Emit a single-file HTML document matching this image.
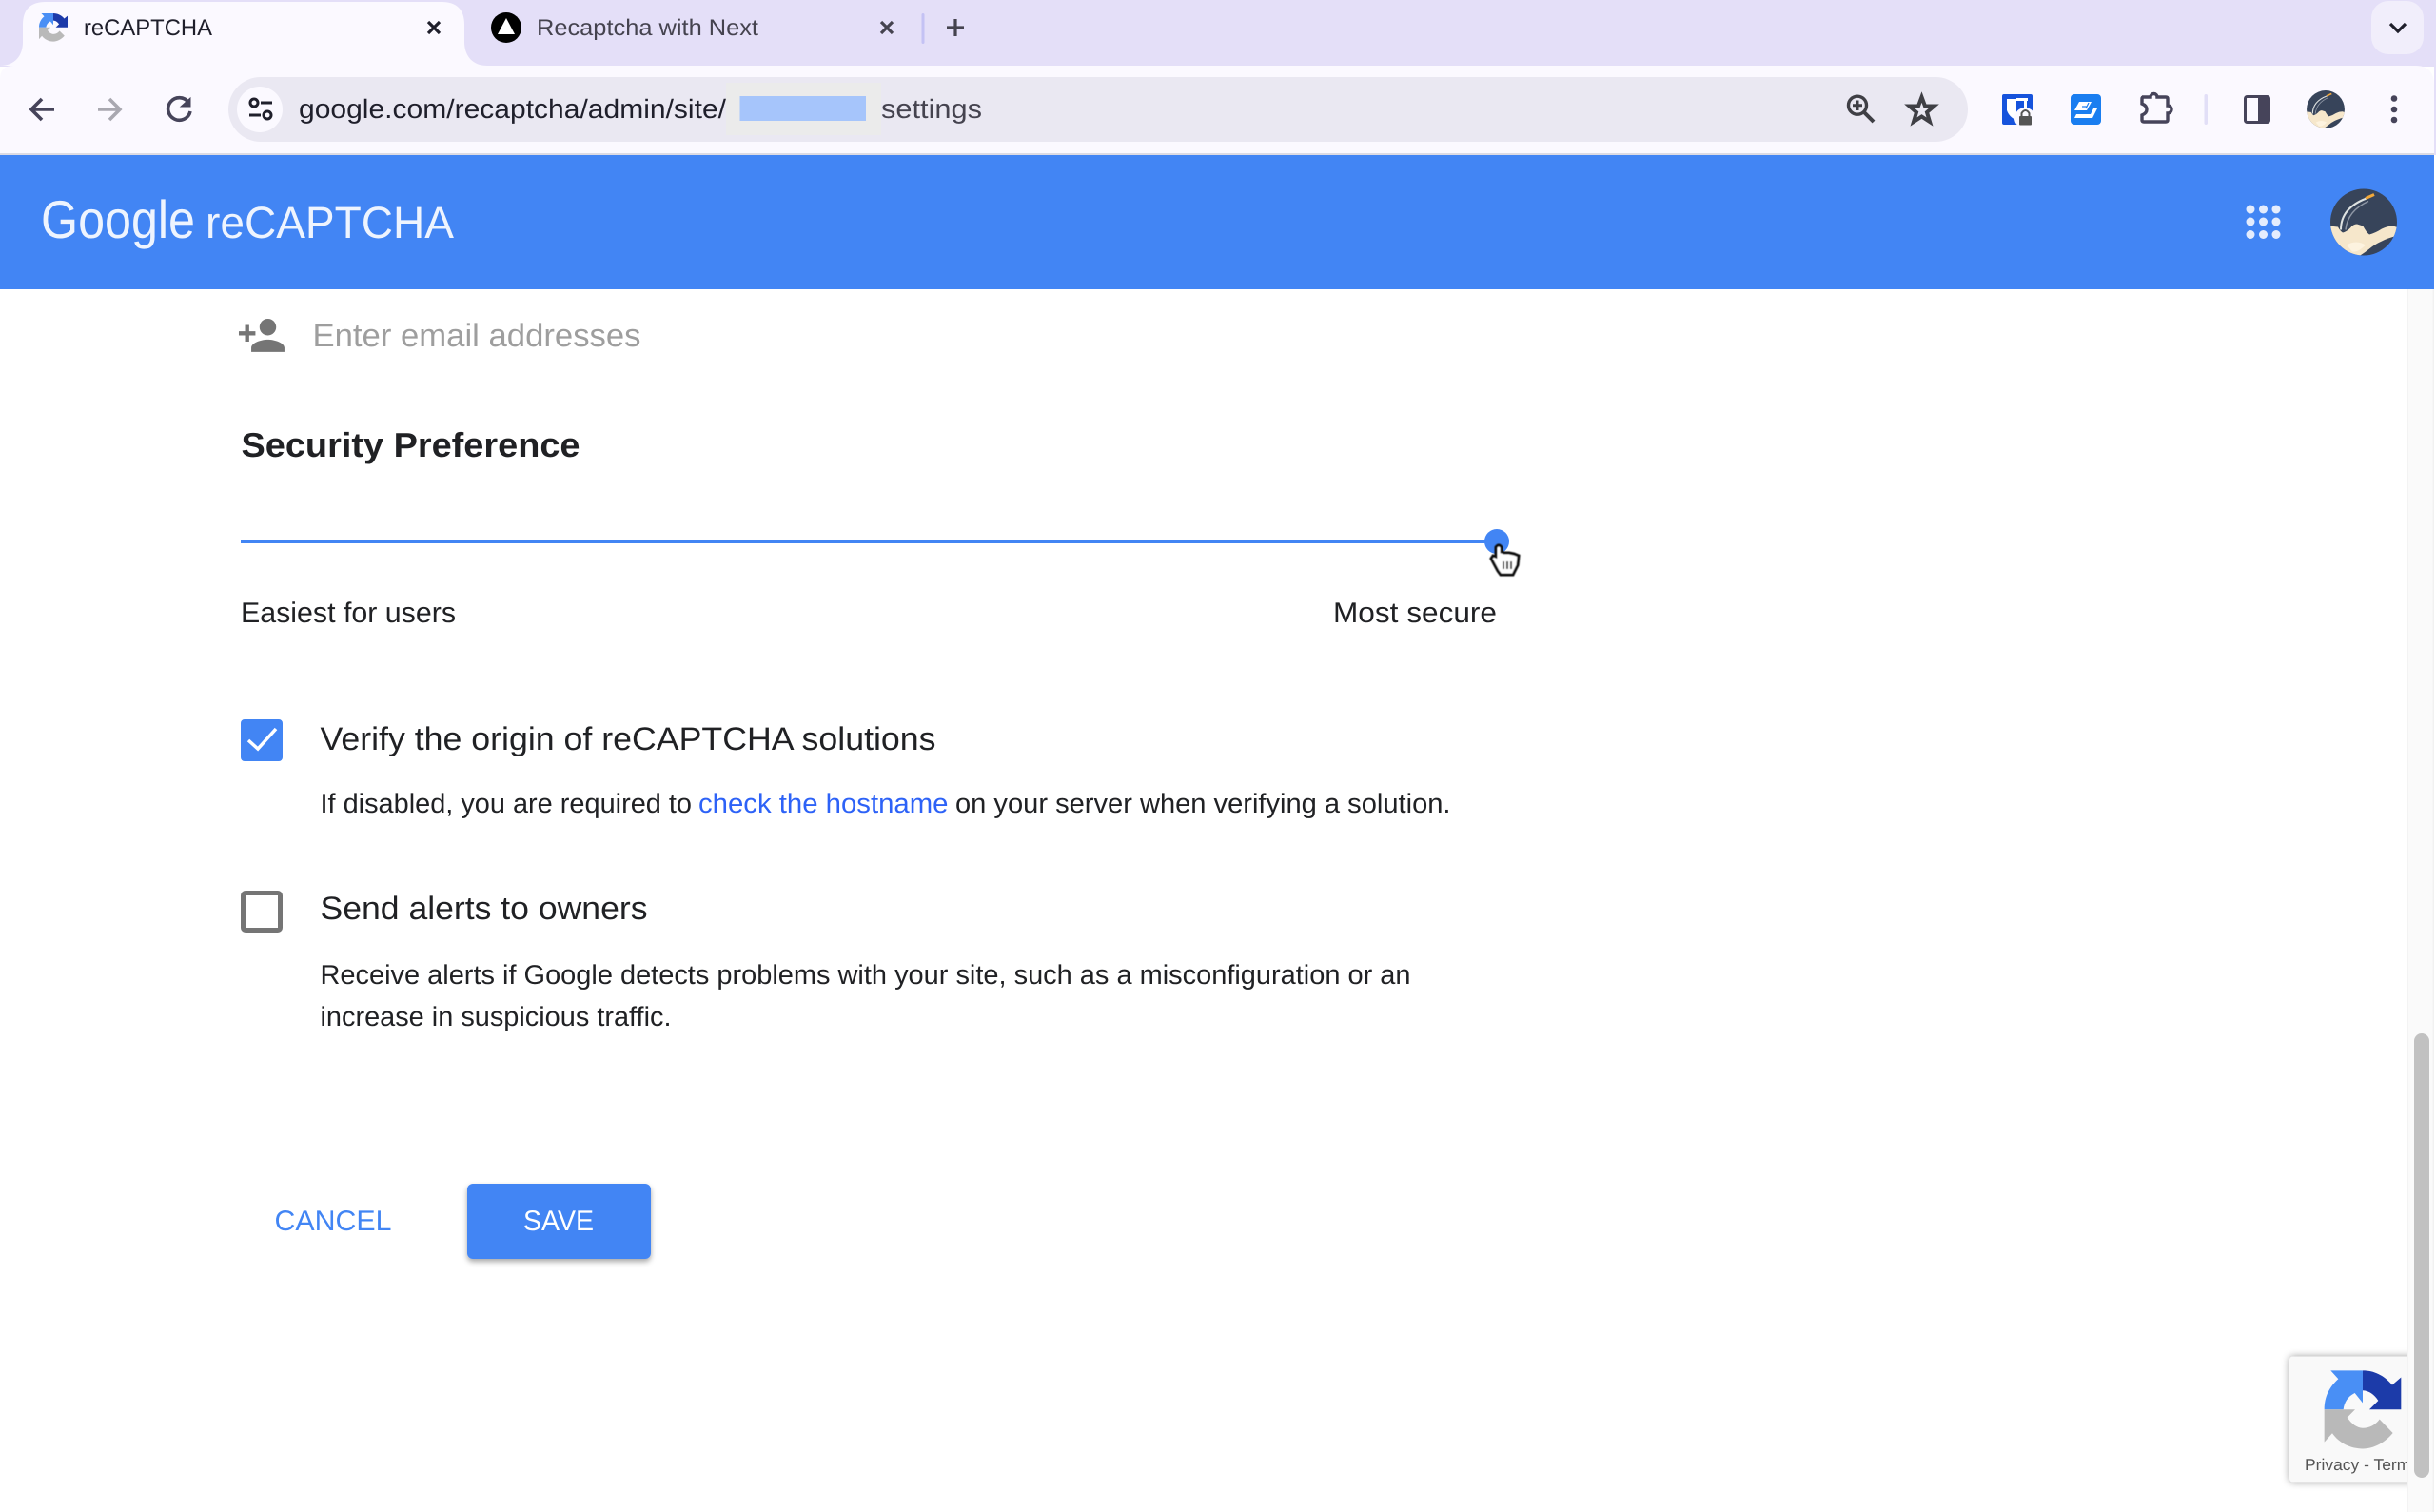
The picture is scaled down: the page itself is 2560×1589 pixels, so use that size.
<!DOCTYPE html>
<html lang="en">
<head>
<meta charset="utf-8">
<title>reCAPTCHA</title>
<style>
html,body{margin:0;padding:0;background:#fff;width:2560px;height:1589px;overflow:hidden}
svg{display:block}
text{font-family:"Liberation Sans",sans-serif;text-rendering:geometricPrecision}
</style>
</head>
<body>
<svg xmlns="http://www.w3.org/2000/svg" width="2560" height="1589" viewBox="0 0 2560 1589">
<defs>
<filter id="sh1" x="-20%" y="-20%" width="140%" height="150%"><feDropShadow dx="0" dy="3" stdDeviation="3" flood-color="#000" flood-opacity=".35"/></filter>
<filter id="sh2" x="-20%" y="-20%" width="140%" height="140%"><feDropShadow dx="0" dy="0" stdDeviation="4" flood-color="#000" flood-opacity=".4"/></filter>
<filter id="blur1"><feGaussianBlur stdDeviation=".6"/></filter>
<filter id="blur2"><feGaussianBlur stdDeviation=".4"/></filter>
<g id="rc">
<path fill="#4a8ff5" d="M188 1255C188 1215 205 1185 232 1162L208 1136H309V1235L284 1205C262 1215 250 1235 248 1255Z"/>
<path fill="#1c3aa9" d="M309 1136C345 1136 375 1150 402 1180L430 1157V1255H330L358 1228C345 1210 330 1198 309 1197Z"/>
<path fill="#b9b9b9" d="M188 1255H285L260 1280C275 1300 290 1311 309 1312C330 1312 350 1302 362 1285L404 1327C380 1355 345 1375 309 1375C270 1375 235 1358 213 1328L188 1355Z"/>
</g>
<clipPath id="avc"><circle r="35"/></clipPath>
<g id="av">
<circle r="35" fill="#37445a"/>
<g clip-path="url(#avc)">
<path fill="#f6e7cb" d="M-36 4L-27 5Q-25 9 -22 11Q-18 10 -14 6Q-11 2 -7 2L-.7 4Q3 11 6 13Q13 11 19 7Q25 4 31 4L37 6V14Q27 16 19 20Q12 23 6 28Q0 33 -7 37H-36Z"/>
<path fill="#fdf3df" d="M-18 24Q-8 18 2 24Q-6 32 -12 31Z"/>
</g>
<path fill="none" stroke="#dfe3e2" stroke-width="2" d="M-24 8Q-24 -15 3 -25"/>
<path fill="none" stroke="#8e97a5" stroke-width="1.500" d="M-19 8Q-17 -12 5 -22"/>
<path fill="none" stroke="#f2a93b" stroke-width="3" d="M2 -25L11 -29"/>
</g>
</defs>

<!-- tab strip -->
<rect width="2560" height="70" fill="#e4dff8"/>
<rect x="2492" y="1" width="55" height="56" rx="18" fill="#f1eefb"/>
<path d="M2512 25L2520 33L2528 25" fill="none" stroke="#1f1f2b" stroke-width="3.200"/>

<!-- toolbar -->
<path d="M0 83Q0 69 14 69H2538Q2558 69 2558 89V163H0Z" fill="#fbf9ff"/>
<rect y="161" width="2558" height="2" fill="#dcdbe4"/>
<rect x="2558" y="69" width="2" height="94" fill="#e4dff8"/>

<!-- active tab -->
<path d="M0 69C16 69 24 58 24 44V26Q24 2 48 2H464Q488 2 488 26V44C488 58 496 69 512 69Z" fill="#fbf9ff"/>
<use href="#rc" transform="translate(41 14) scale(.124) translate(-188 -1136)"/>
<text x="88" y="37" font-size="24" fill="#1f1f2b" textLength="135" lengthAdjust="spacingAndGlyphs">reCAPTCHA</text>
<path d="M450 23L462 35M462 23L450 35" stroke="#1f1f2b" stroke-width="3.200" fill="none"/>

<!-- second tab -->
<circle cx="532" cy="29" r="16" fill="#000"/>
<path d="M532 19L541 36H523Z" fill="#fff"/>
<text x="564" y="37" font-size="24" fill="#45434f" textLength="233" lengthAdjust="spacingAndGlyphs">Recaptcha with Next</text>
<path d="M926 23L938 35M938 23L926 35" stroke="#45434f" stroke-width="3.200" fill="none"/>
<rect x="968.500" y="14" width="3" height="32" rx="1.500" fill="#c4c2f4"/>
<path d="M1004 20V38M995 29H1013" stroke="#45434f" stroke-width="3.200" fill="none"/>

<!-- nav icons -->
<path d="M57 115H33M44 104L33 115L44 126" fill="none" stroke="#46445a" stroke-width="3.600"/>
<path d="M103 115H126M115 104L126 115L115 126" fill="none" stroke="#a9a8b0" stroke-width="3.600"/>
<path d="M198 107.500A11.800 11.800 0 1 0 200 117" fill="none" stroke="#46445a" stroke-width="3.600"/>
<path d="M190 112H200V103Z" fill="#46445a" stroke="#46445a" stroke-width="1"/>

<!-- omnibox -->
<rect x="240" y="81" width="1828" height="68" rx="34" fill="#eae8f2"/>
<circle cx="273" cy="115" r="24" fill="#fbf9ff"/>
<circle cx="267" cy="108" r="4" fill="none" stroke="#1f1f2b" stroke-width="3"/>
<path d="M274 108H286M262 121H274" stroke="#1f1f2b" stroke-width="3"/>
<circle cx="281" cy="121" r="4" fill="none" stroke="#1f1f2b" stroke-width="3"/>
<text x="314" y="124" font-size="28" fill="#1f1f2b" textLength="449" lengthAdjust="spacingAndGlyphs">google.com/recaptcha/admin/site/</text>
<rect x="763" y="87" width="163" height="55" fill="#ebebeb"/>
<rect x="777.500" y="101" width="132.500" height="26" fill="#a6c5fb"/>
<text x="926" y="124" font-size="28" fill="#45434f" textLength="106" lengthAdjust="spacingAndGlyphs">settings</text>

<!-- zoom, star -->
<circle cx="1952" cy="110.700" r="9.500" fill="none" stroke="#3f3f45" stroke-width="3.400"/>
<path d="M1952 105.500V116M1947 110.700H1957" stroke="#3f3f45" stroke-width="3"/>
<path d="M1959 118L1969 128" stroke="#3f3f45" stroke-width="4"/>
<path d="M2019.500 102L2023 111.500H2032.500L2025 118L2028 128L2019.500 122.500L2011 128L2014 118L2006.500 111.500H2016Z" fill="none" stroke="#3f3f45" stroke-width="4"/>

<!-- extensions -->
<rect x="2104" y="99" width="32" height="32" rx="2" fill="#1653dc"/>
<path d="M2109 104H2119V118Q2119 124 2124 128Q2112 125 2109 116Z" fill="#fff"/>
<path d="M2119 104H2131V118H2119Z" fill="#1653dc"/>
<rect x="2127" y="103" width="3" height="16" fill="#fff"/>
<path d="M2119 103H2131V106H2119Z" fill="#fff"/>
<circle cx="2128" cy="124" r="11" fill="#fbf9ff"/>
<rect x="2122" y="122" width="13" height="9.500" rx="1" fill="#555"/>
<path d="M2124.500 122V119Q2128.500 113 2132.500 119V122" fill="none" stroke="#555" stroke-width="2"/>

<rect x="2176" y="99" width="32" height="32" rx="4" fill="#1a7ef0"/>
<path d="M2185 107H2198L2193 116H2180Z" fill="#fff"/>
<path d="M2200 114H2204L2199 124H2180L2182 120H2197Z" fill="#fff"/>
<path d="M2188 112H2193M2195 108L2192 114" stroke="#1a7ef0" stroke-width="1.200" fill="none"/>

<path d="M2251 102H2260A3.500 3.500 0 0 1 2267 102H2276Q2278 102 2278 104V111A3.800 3.800 0 0 1 2278 119V126Q2278 128 2276 128H2253Q2251 128 2251 126V121Q2256 119 2256 115Q2256 111 2251 109V104Q2251 102 2253 102Z" fill="none" stroke="#46445a" stroke-width="3.400"/>

<rect x="2316.500" y="99" width="3.500" height="32" rx="1.700" fill="#e2dff7"/>
<rect x="2359.500" y="101.500" width="25" height="27" rx="2" fill="none" stroke="#46445a" stroke-width="3"/>
<rect x="2373" y="101" width="12" height="28" fill="#46445a"/>

<use href="#av" transform="translate(2444 115) scale(.57)"/>
<circle cx="2516" cy="103.500" r="3.300" fill="#46445a"/>
<circle cx="2516" cy="115" r="3.300" fill="#46445a"/>
<circle cx="2516" cy="126" r="3.300" fill="#46445a"/>

<!-- app bar -->
<rect y="163" width="2558" height="141" fill="#4285f4"/>
<text x="43" y="250" font-size="56" fill="#eef4fe" textLength="162" lengthAdjust="spacingAndGlyphs">Google</text>
<text x="216" y="250" font-size="47" fill="#eef4fe" textLength="261" lengthAdjust="spacingAndGlyphs">reCAPTCHA</text>
<g fill="#e4ecfd">
<circle cx="2365" cy="220" r="4.500"/><circle cx="2378.500" cy="220" r="4.500"/><circle cx="2392" cy="220" r="4.500"/>
<circle cx="2365" cy="233" r="4.500"/><circle cx="2378.500" cy="233" r="4.500"/><circle cx="2392" cy="233" r="4.500"/>
<circle cx="2365" cy="246.500" r="4.500"/><circle cx="2378.500" cy="246.500" r="4.500"/><circle cx="2392" cy="246.500" r="4.500"/>
</g>
<use href="#av" transform="translate(2484 233.500)"/>

<!-- content -->
<path transform="translate(248.800 326.300) scale(2.180)" fill="#757575" d="M15 12c2.210 0 4-1.790 4-4s-1.790-4-4-4-4 1.790-4 4 1.790 4 4 4zm-9-2V7H4v3H1v2h3v3h2v-3h3v-2H6zm9 4c-2.670 0-8 1.340-8 4v2h16v-2c0-2.660-5.330-4-8-4z"/>
<text x="328.500" y="364" font-size="34" fill="#9e9e9e" textLength="345" lengthAdjust="spacingAndGlyphs">Enter email addresses</text>
<text x="253.500" y="480" font-size="36" font-weight="700" fill="#202124" textLength="356" lengthAdjust="spacingAndGlyphs">Security Preference</text>

<rect x="253" y="567" width="1320" height="4" fill="#4285f4"/>
<circle cx="1573" cy="569" r="13" fill="#4285f4"/>
<g filter="url(#blur2)">
<path d="M1572 575V585L1569 584L1567 587L1574 600L1577 604H1590L1595 594L1596 584L1591 582L1586 581L1581 581L1578 580V575Q1575 571 1572 575Z" fill="#fff" stroke="#111" stroke-width="3"/>
<path d="M1580 590V598M1584 590V598M1588 590V598" stroke="#222" stroke-width="1.800"/>
</g>

<text x="253" y="654" font-size="30" fill="#202124" textLength="226" lengthAdjust="spacingAndGlyphs">Easiest for users</text>
<text x="1401" y="654" font-size="30" fill="#202124" textLength="172" lengthAdjust="spacingAndGlyphs">Most secure</text>

<rect x="253" y="756" width="44" height="44" rx="4" fill="#4285f4"/>
<path d="M261 778L271 787L290 766" fill="none" stroke="#fff" stroke-width="3.500"/>
<text x="336.500" y="788" font-size="34" fill="#202124" textLength="647" lengthAdjust="spacingAndGlyphs">Verify the origin of reCAPTCHA solutions</text>
<text x="336.500" y="854" font-size="28.500" fill="#202124" textLength="390.500" lengthAdjust="spacingAndGlyphs">If disabled, you are required to</text>
<text x="734" y="854" font-size="28.500" fill="#2d62f7" textLength="262.500" lengthAdjust="spacingAndGlyphs">check the hostname</text>
<text x="1004" y="854" font-size="28.500" fill="#202124" textLength="520.500" lengthAdjust="spacingAndGlyphs">on your server when verifying a solution.</text>

<rect x="255.500" y="938.500" width="39" height="39" rx="2.500" fill="#fff" stroke="#757575" stroke-width="5"/>
<text x="336.500" y="966" font-size="34" fill="#202124" textLength="344" lengthAdjust="spacingAndGlyphs">Send alerts to owners</text>
<text x="336.500" y="1034" font-size="28.500" fill="#202124" textLength="1146" lengthAdjust="spacingAndGlyphs">Receive alerts if Google detects problems with your site, such as a misconfiguration or an</text>
<text x="336.500" y="1078" font-size="28.500" fill="#202124" textLength="369" lengthAdjust="spacingAndGlyphs">increase in suspicious traffic.</text>

<text x="288.500" y="1293" font-size="30" fill="#4285f4" textLength="123" lengthAdjust="spacingAndGlyphs">CANCEL</text>
<rect x="491" y="1244" width="193" height="79" rx="6" fill="#4285f4" filter="url(#sh1)"/>
<text x="550" y="1293" font-size="30" fill="#fff" textLength="74" lengthAdjust="spacingAndGlyphs">SAVE</text>

<!-- recaptcha badge -->
<rect x="2406" y="1425.500" width="140" height="132" rx="4" fill="#f9f9f9" filter="url(#sh2)"/>
<use href="#rc" transform="translate(2380 1050) scale(.3333 .3436)" filter="url(#blur1)"/>
<text x="2422" y="1545" font-size="17" fill="#555" textLength="120" lengthAdjust="spacingAndGlyphs">Privacy - Terms</text>

<!-- scrollbar -->
<rect x="2529" y="304" width="29" height="1285" fill="#fafafa"/>
<rect x="2529" y="304" width="1.500" height="1285" fill="#ececec"/>
<rect x="2556.500" y="304" width="1.500" height="1285" fill="#f1f1f1"/>
<rect x="2537" y="1086" width="16" height="467" rx="8" fill="#c1c1c1"/>
</svg>
</body>
</html>
